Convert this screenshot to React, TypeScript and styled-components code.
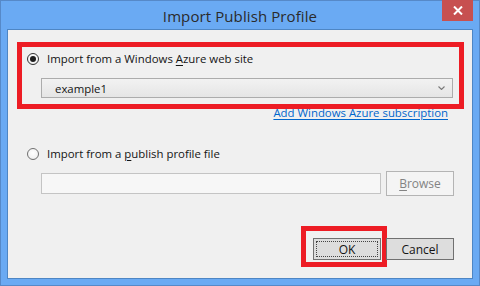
import React from "react";
import styled, { createGlobalStyle } from "styled-components";

const Global = createGlobalStyle`
  html, body { margin: 0; padding: 0; background: #ffffff; }
  body { font-family: "Open Sans", "Noto Sans", "Liberation Sans", sans-serif; }
  * { box-sizing: border-box; }
`;

const Window = styled.div`
  width: 480px;
  height: 286px;
  background: #6aaaf3;
  border: 1px solid #5689c8;
  padding: 0 6px 6px 6px;
  display: flex;
  flex-direction: column;
`;

const TitleBar = styled.div`
  position: relative;
  height: 28px;
  display: flex;
  align-items: center;
  justify-content: center;
`;

const Title = styled.div`
  font-size: 15px;
  color: #2b2b2b;
  letter-spacing: 0.1px;
  padding-top: 1px;
`;

const CloseButton = styled.div`
  position: absolute;
  top: -1px;
  right: 0;
  width: 31px;
  height: 21px;
  background: #c75050;
  display: flex;
  align-items: center;
  justify-content: center;
`;

const Client = styled.div`
  flex: 1;
  background: #f0f0f0;
  border: 1px solid #4e86c4;
  padding: 12px 0 0 9px;
  display: flex;
  flex-direction: column;
  font-size: 11.4px;
  color: #141414;
`;

const Group = styled.div`
  width: 447px;
  height: 67px;
  border: 5px solid #ed1c24;
  padding: 5px 0 0 5px;
  display: flex;
  flex-direction: column;
  gap: 12px;
`;

const RadioRow = styled.label`
  display: flex;
  align-items: center;
  height: 14px;
  gap: 8px;
  line-height: 14px;
`;

const Radio = styled.span<{ $checked?: boolean }>`
  width: 12px;
  height: 12px;
  border-radius: 50%;
  border: 1px solid ${(p) => (p.$checked ? "#333333" : "#707070")};
  background: radial-gradient(circle at 50% 40%, #ffffff 0%, #f4f4f4 60%, #e4e4e4 100%);
  display: flex;
  align-items: center;
  justify-content: center;
  flex: none;
  &::after {
    content: "";
    display: ${(p) => (p.$checked ? "block" : "none")};
    width: 6px;
    height: 6px;
    border-radius: 50%;
    background: #1c1c1c;
  }
`;

const U = styled.span`
  text-decoration: underline;
  text-underline-offset: 2px;
`;

const Select = styled.div`
  margin-left: 14px;
  width: 412px;
  height: 20px;
  border: 1px solid #acacac;
  background: linear-gradient(#f2f2f2, #e5e5e5);
  display: flex;
  align-items: center;
  justify-content: space-between;
  padding: 0 7px 0 13px;
`;

const LinkRow = styled.div`
  display: flex;
  justify-content: flex-end;
  margin: -3px 24px 0 0;
  height: 14px;
  line-height: 14px;
`;

const Link = styled.a`
  color: #0066cc;
  text-decoration: underline;
  text-underline-offset: 2px;
  cursor: pointer;
`;

const SecondRadio = styled(RadioRow)`
  margin: 27px 0 0 10px;
`;

const FileRow = styled.div`
  display: flex;
  align-items: center;
  gap: 5px;
  margin: 10px 0 0 24px;
  height: 25px;
`;

const TextBox = styled.div`
  width: 340px;
  height: 21px;
  border: 1px solid #c4c4c4;
  background: #f7f7f7;
`;

const Button = styled.div<{ $disabled?: boolean; $default?: boolean }>`
  width: 68px;
  height: ${(p) => (p.$disabled ? "25px" : "22px")};
  border: 1px solid ${(p) => (p.$disabled ? "#b4b4b4" : "#707070")};
  background: ${(p) => (p.$disabled ? "#f4f4f4" : "#dddddd")};
  color: ${(p) => (p.$disabled ? "#838383" : "#141414")};
  display: flex;
  align-items: center;
  justify-content: center;
  font-size: 12px;
  position: relative;
  ${(p) =>
    p.$default
      ? `&::before {
    content: "";
    position: absolute;
    inset: 2px;
    border: 1px dotted #444;
  }`
      : ""}
`;

const ButtonRow = styled.div`
  display: flex;
  justify-content: flex-end;
  gap: 5px;
  margin: 42px 18px 0 0;
`;

const Highlight = styled.div`
  position: relative;
  &::after {
    content: "";
    position: absolute;
    left: -12px;
    top: -12px;
    right: -6px;
    bottom: -7px;
    border: 5px solid #ed1c24;
    pointer-events: none;
  }
`;

const Chevron = () => (
  <svg width="7" height="4" viewBox="0 0 7 4">
    <path d="M0.5 0.5 L3.5 3.5 L6.5 0.5" fill="none" stroke="#7a7a7a" strokeWidth="1.1" />
  </svg>
);

export default function App() {
  return (
    <>
      <Global />
      <Window>
        <TitleBar>
          <Title>Import Publish Profile</Title>
          <CloseButton>
            <svg width="10" height="9" viewBox="0 0 10 9">
              <path d="M1 0.5 L9 8.5 M9 0.5 L1 8.5" stroke="#fff" strokeWidth="2" />
            </svg>
          </CloseButton>
        </TitleBar>
        <Client>
          <Group>
            <RadioRow>
              <Radio $checked />
              <span>
                Import from a Windows <U>A</U>zure web site
              </span>
            </RadioRow>
            <Select>
              <span>example1</span>
              <Chevron />
            </Select>
          </Group>
          <LinkRow>
            <Link>Add Windows Azure subscription</Link>
          </LinkRow>
          <SecondRadio>
            <Radio />
            <span>
              Import from a <U>p</U>ublish profile file
            </span>
          </SecondRadio>
          <FileRow>
            <TextBox />
            <Button $disabled>
              <span>
                <U>B</U>rowse
              </span>
            </Button>
          </FileRow>
          <ButtonRow>
            <Highlight>
              <Button $default>OK</Button>
            </Highlight>
            <Button>Cancel</Button>
          </ButtonRow>
        </Client>
      </Window>
    </>
  );
}
